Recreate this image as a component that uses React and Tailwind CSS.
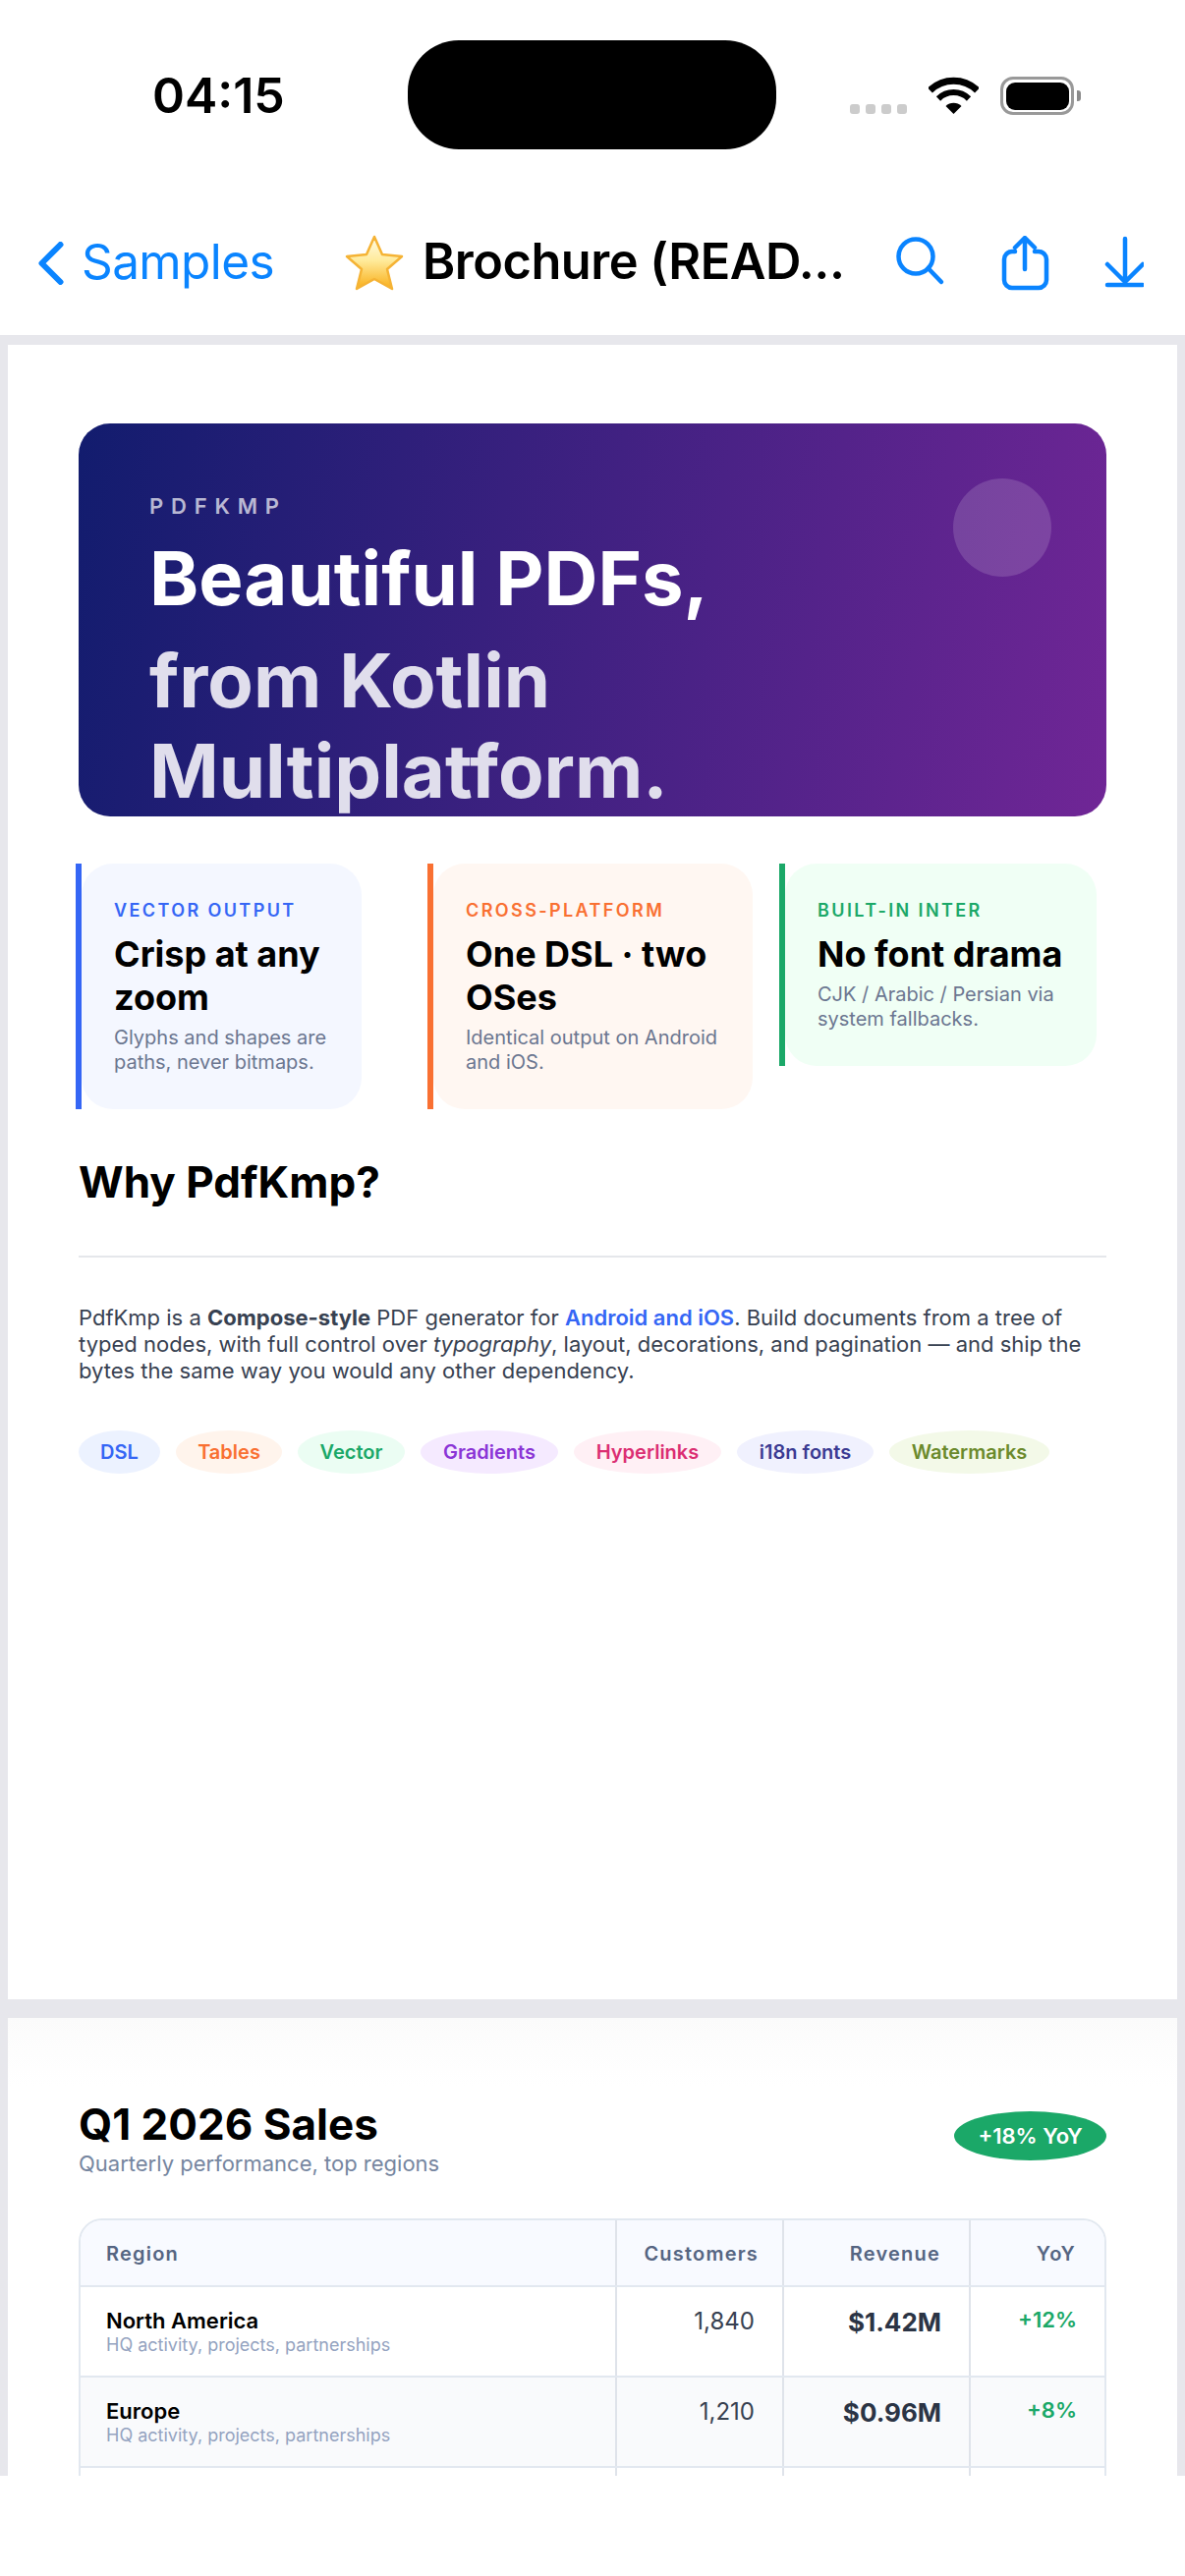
const features = [
  { label: 'VECTOR OUTPUT', title: 'Crisp at any zoom', desc: 'Glyphs and shapes are paths, never bitmaps.', bar: 'bg-[#3566f5]', bg: 'bg-[#f4f7ff]', text: 'text-[#3566f5]', w: 'w-[285px]' },
  { label: 'CROSS-PLATFORM', title: 'One DSL · two OSes', desc: 'Identical output on Android and iOS.', bar: 'bg-[#f97032]', bg: 'bg-[#fff7f2]', text: 'text-[#f97032]', w: 'w-[325px]' },
  { label: 'BUILT-IN INTER', title: 'No font drama', desc: 'CJK / Arabic / Persian via system fallbacks.', bar: 'bg-[#1ba868]', bg: 'bg-[#f0fff5]', text: 'text-[#1ba868]', w: 'w-[317px]' },
]

const chips = [
  { label: 'DSL', cls: 'bg-[#ecf2ff] text-[#3566f5] w-[83px]' },
  { label: 'Tables', cls: 'bg-[#fff4ec] text-[#f97032] w-[108px]' },
  { label: 'Vector', cls: 'bg-[#ebfdf3] text-[#1ba868] w-[109px]' },
  { label: 'Gradients', cls: 'bg-[#f5eaff] text-[#8b35d6] w-[140px]' },
  { label: 'Hyperlinks', cls: 'bg-[#fff0f5] text-[#db2e72] w-[150px]' },
  { label: 'i18n fonts', cls: 'bg-[#f0f1fe] text-[#3b3a92] w-[139px]' },
  { label: 'Watermarks', cls: 'bg-[#f3f9e8] text-[#6b8a2c] w-[163px]' },
]

const rows = [
  { name: 'North America', customers: '1,840', revenue: '$1.42M', yoy: '+12%', bg: 'bg-white' },
  { name: 'Europe', customers: '1,210', revenue: '$0.96M', yoy: '+8%', bg: 'bg-[#f9fafc]' },
]

function StatusBar() {
  return (
    <div className="flex h-[222px] pt-[41px] items-start">
      <div className="w-[415px] pl-[155px] pt-[31px] text-[50px] leading-[50px] font-semibold text-black">04:15</div>
      <div className="w-[375px] h-[111px] rounded-[52px] bg-black" />
      <div className="flex ml-[75px] pt-[37px] items-start">
        <div className="flex gap-[6px] pt-[28px]">
          <div className="w-[10px] h-[10px] rounded-[3px] bg-[#cccccc]" />
          <div className="w-[10px] h-[10px] rounded-[3px] bg-[#cccccc]" />
          <div className="w-[10px] h-[10px] rounded-[3px] bg-[#cccccc]" />
          <div className="w-[10px] h-[10px] rounded-[3px] bg-[#cccccc]" />
        </div>
        <svg className="ml-[22px]" width="51" height="38" viewBox="0 0 51 38">
          <path d="M1.5 14 A34.5 34.5 0 0 1 49.5 14" fill="none" stroke="#000" strokeWidth="7" />
          <path d="M10 22.5 A22 22 0 0 1 41 22.5" fill="none" stroke="#000" strokeWidth="6" />
          <path d="M25.5 38 L17.5 30 A11.5 11.5 0 0 1 33.5 30 Z" fill="#000" />
        </svg>
        <div className="ml-[22px] flex items-center">
          <div className="w-[75px] h-[39px] rounded-[13px] border-[3.5px] border-[#999999] p-[2.5px]">
            <div className="w-full h-full rounded-[9px] bg-black" />
          </div>
          <div className="ml-[3px] w-[4px] h-[11px] rounded-r-[3px] bg-[#8a8a8a]" />
        </div>
      </div>
    </div>
  )
}

function NavBar() {
  return (
    <div className="flex items-center h-[119px] pb-[28px] bg-white">
      <svg className="ml-[39px]" width="26" height="44" viewBox="0 0 26 44">
        <path d="M22.5 3 L3.5 22 L22.5 41" fill="none" stroke="#0a84ff" strokeWidth="6" strokeLinecap="round" strokeLinejoin="round" />
      </svg>
      <span className="-mt-[3px] ml-[18px] w-[267px] text-[49.5px] leading-[60px] tracking-[-0.6px] text-[#0a84ff]">Samples</span>
      <svg width="62" height="58" viewBox="0 0 62 58">
        <defs>
          <linearGradient id="star" x1="0" y1="0" x2="0" y2="1">
            <stop offset="0" stopColor="#fffbe6" />
            <stop offset="0.45" stopColor="#ffeb9c" />
            <stop offset="1" stopColor="#f9ae17" />
          </linearGradient>
        </defs>
        <path d="M31 2 L39 20 L59 22 L44 35 L49 55 L31 45 L13 55 L18 35 L3 22 L23 20 Z" fill="url(#star)" stroke="#f5b335" strokeWidth="2.5" strokeLinejoin="round" />
      </svg>
      <span className="-mt-[3px] ml-[18px] w-[430px] text-[50.5px] leading-[60px] font-semibold tracking-[-0.5px] text-black whitespace-nowrap">Brochure (READ...</span>
      <svg className="ml-[52px]" width="252" height="56" viewBox="0 0 252 56">
        <g fill="none" stroke="#0a84ff" strokeWidth="4.5" strokeLinecap="round" strokeLinejoin="round">
          <circle cx="20" cy="21" r="17.5" />
          <path d="M32.5 33 L46 47" />
          <path d="M121 16 H118 A8 8 0 0 0 110 24 V45 A8 8 0 0 0 118 53 H145 A8 8 0 0 0 153 45 V24 A8 8 0 0 0 145 16 H141" />
          <path d="M131 34 V3 M121 12 L131 2 L141 12" />
          <path d="M233 3 V47 M215 29 L233 47 L251 29" />
          <path d="M215 50 H251" />
        </g>
      </svg>
    </div>
  )
}

function Hero() {
  return (
    <div className="relative h-[400px] overflow-hidden rounded-[32px] bg-[linear-gradient(100deg,#121c6e,#702696)] pl-[72px] pt-[68px]">
      <div className="absolute top-[56px] right-[56px] w-[100px] h-[100px] rounded-full bg-white/15" />
      <div className="text-[22px] leading-[32px] font-semibold tracking-[7.8px] text-white/70">PDFKMP</div>
      <div className="mt-[11px] text-[76px] leading-[92px] font-bold text-white">Beautiful PDFs,</div>
      <div className="mt-[12px] text-[76px] leading-[92px] font-bold text-[#e0deec]">from Kotlin</div>
      <div className="text-[76px] leading-[92px] font-bold text-[#e0deec]">Multiplatform.</div>
    </div>
  )
}

function FeatureCards() {
  return (
    <div className="-ml-[3px] mt-[48px] flex items-start">
      {features.map((f) => (
        <div key={f.label} className="flex w-[358px] shrink-0">
          <div className={`w-[6px] ${f.bar}`} />
          <div className={`${f.w} ${f.bg} rounded-[32px] pl-[33px] pr-[10px] pt-[37px] pb-[36px]`}>
            <div className={`text-[18px] leading-[22px] font-semibold tracking-[2.4px] whitespace-nowrap ${f.text}`}>{f.label}</div>
            <div className="mt-[11px] text-[36px] leading-[44px] font-bold text-black">{f.title}</div>
            <div className="mt-[7px] text-[20px] leading-[24.5px] text-[#6b7690]">{f.desc}</div>
          </div>
        </div>
      ))}
    </div>
  )
}

function Intro() {
  return (
    <>
      <h2 className="mt-[47px] text-[44px] leading-[54px] font-bold text-black">Why PdfKmp?</h2>
      <div className="mt-[48px] h-[2px] bg-[#e5e7eb]" />
      <p className="mt-[48px] text-[22px] leading-[27px] text-[#374151]">
        PdfKmp is a <b className="font-bold">Compose-style</b> PDF generator for <span className="font-semibold text-[#3566f5]">Android and iOS</span>. Build documents from a tree of typed nodes, with full control over <i>typography</i>, layout, decorations, and pagination — and ship the bytes the same way you would any other dependency.
      </p>
      <div className="mt-[47px] flex gap-[16px]">
        {chips.map((c) => (
          <div key={c.label} className={`h-[44px] rounded-[50%] flex items-center justify-center text-[20px] font-semibold whitespace-nowrap ${c.cls}`}>{c.label}</div>
        ))}
      </div>
    </>
  )
}

function SalesTable() {
  return (
    <div className="mt-[43px] rounded-t-[24px] border-2 border-[#e2e8f0] overflow-hidden">
      <div className="grid grid-cols-[546px_170px_190px_136px] h-[68px] bg-[#f8faff] border-b-2 border-[#e2e8f0] text-[20px] font-semibold tracking-[1.2px] text-[#556582]">
        <div className="border-r-2 border-[#dfe3ea] pl-[26px] pt-[19px]">Region</div>
        <div className="border-r-2 border-[#dfe3ea] pr-[24px] pt-[19px] text-right">Customers</div>
        <div className="border-r-2 border-[#dfe3ea] pr-[29px] pt-[19px] text-right">Revenue</div>
        <div className="pr-[29px] pt-[19px] text-right">YoY</div>
      </div>
      {rows.map((r) => (
        <div key={r.name} className={`grid grid-cols-[546px_170px_190px_136px] h-[92px] border-b-2 border-[#e2e8f0] ${r.bg}`}>
          <div className="border-r-2 border-[#dfe3ea] pl-[26px] pt-[21px]">
            <div className="text-[22px] leading-[27px] font-semibold text-black">{r.name}</div>
            <div className="text-[18px] leading-[22px] text-[#94a3c0]">HQ activity, projects, partnerships</div>
          </div>
          <div className="border-r-2 border-[#dfe3ea] pr-[28px] pt-[20px] text-right text-[24px] leading-[30px] text-[#374151]">{r.customers}</div>
          <div className="border-r-2 border-[#dfe3ea] pr-[28px] pt-[20px] text-right text-[26px] leading-[32px] font-bold text-[#2b3445]">{r.revenue}</div>
          <div className="pr-[28px] pt-[20px] text-right text-[22px] leading-[27px] font-semibold text-[#1ba868]">{r.yoy}</div>
        </div>
      ))}
      <div className="grid grid-cols-[546px_170px_190px_136px] h-[92px] bg-white">
        <div className="border-r-2 border-[#dfe3ea]" />
        <div className="border-r-2 border-[#dfe3ea]" />
        <div className="border-r-2 border-[#dfe3ea]" />
        <div />
      </div>
    </div>
  )
}

export default function App() {
  return (
    <div className="w-[1206px] h-[2622px] overflow-hidden bg-white font-[Inter,sans-serif]">
      <StatusBar />
      <NavBar />
      <div className="bg-[#e7e7ec] px-[8px] pt-[10px]">
        <div className="h-[1684px] bg-white px-[72px] pt-[80px]">
          <Hero />
          <FeatureCards />
          <Intro />
        </div>
        <div className="mt-[19px] h-[466px] overflow-hidden bg-[linear-gradient(#fbfbfb,#ffffff_70px)] px-[72px] pt-[81px]">
          <div className="flex items-start justify-between">
            <div>
              <h2 className="text-[44px] leading-[54px] font-bold text-black">Q1 2026 Sales</h2>
              <div className="text-[22px] leading-[26px] text-[#76869f]">Quarterly performance, top regions</div>
            </div>
            <div className="mt-[14px] w-[155px] h-[50px] rounded-[50%] bg-[#1ba868] flex items-center justify-center text-[22px] font-semibold text-white">+18% YoY</div>
          </div>
          <SalesTable />
        </div>
      </div>
      <div className="h-[102px] bg-white" />
    </div>
  )
}
